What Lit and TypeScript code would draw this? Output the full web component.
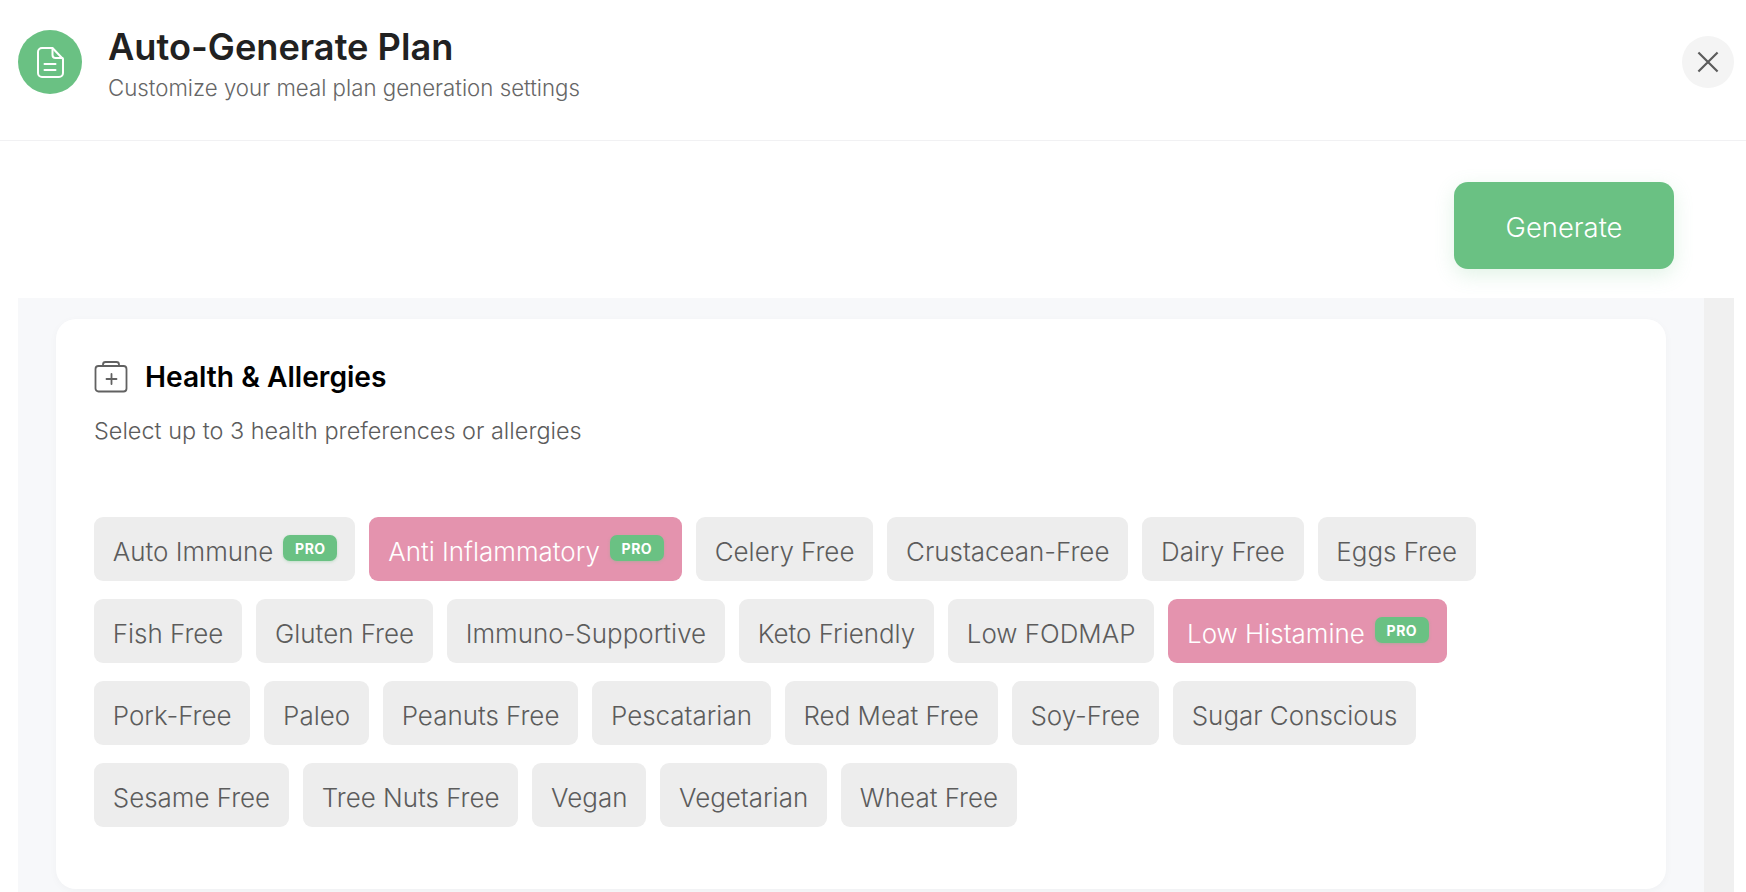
import { LitElement, html, css, svg } from "lit";
import { customElement } from "lit/decorators.js";

type Chip = { label: string; pro?: boolean; selected?: boolean };

const CHIPS: Chip[] = [
  { label: "Auto Immune", pro: true },
  { label: "Anti Inflammatory", pro: true, selected: true },
  { label: "Celery Free" },
  { label: "Crustacean-Free" },
  { label: "Dairy Free" },
  { label: "Eggs Free" },
  { label: "Fish Free" },
  { label: "Gluten Free" },
  { label: "Immuno-Supportive" },
  { label: "Keto Friendly" },
  { label: "Low FODMAP" },
  { label: "Low Histamine", pro: true, selected: true },
  { label: "Pork-Free" },
  { label: "Paleo" },
  { label: "Peanuts Free" },
  { label: "Pescatarian" },
  { label: "Red Meat Free" },
  { label: "Soy-Free" },
  { label: "Sugar Conscious" },
  { label: "Sesame Free" },
  { label: "Tree Nuts Free" },
  { label: "Vegan" },
  { label: "Vegetarian" },
  { label: "Wheat Free" },
];

const docIcon = svg`<svg class="doc" viewBox="0 0 27 31" fill="none" stroke="#fff" stroke-width="2" stroke-linejoin="round" stroke-linecap="round">
  <path d="M5 1h10.500L26 12v14a4 4 0 0 1-4 4H5a4 4 0 0 1-4-4V5a4 4 0 0 1 4-4z"/>
  <path d="M15.500 1.500V8a3 3 0 0 0 3 3h7"/>
  <path d="M7.500 17h11M7.500 23h11"/>
</svg>`;

const kitIcon = svg`<svg class="kit" viewBox="0 0 34 34" fill="none" stroke="#616161" stroke-width="1.8" stroke-linejoin="round" stroke-linecap="round">
  <rect x="1.500" y="6" width="31" height="25.500" rx="3"/>
  <path d="M9 6V4.500A2.500 2.500 0 0 1 11.500 2h11A2.500 2.500 0 0 1 25 4.500V6"/>
  <path d="M17.500 14v10M12.500 19h10"/>
</svg>`;

const closeIcon = svg`<svg class="x" viewBox="0 0 20 20" fill="none" stroke="#5c5c5c" stroke-width="2" stroke-linecap="square">
  <path d="M2 2l16 16M18 2L2 18"/>
</svg>`;

@customElement("app-root")
export class AppRoot extends LitElement {
  static styles = css`
    :host {
      display: flex;
      flex-direction: column;
      height: 892px;
      overflow: hidden;
      background: #fff;
      font-family: Inter, "Liberation Sans", sans-serif;
    }
    .header {
      flex: none;
      box-sizing: border-box;
      height: 141px;
      padding: 30px 12px 0 18px;
      display: flex;
      align-items: flex-start;
      border-bottom: 1px solid #f1f1f3;
    }
    .circle {
      flex: none;
      width: 64px;
      height: 64px;
      border-radius: 50%;
      background: #6ac183;
      display: flex;
      align-items: center;
      justify-content: center;
    }
    .doc { width: 27px; height: 31px; }
    .titles {
      flex: 1;
      margin-left: 26px;
      margin-top: -5px;
    }
    h1 {
      margin: 0;
      font-size: 36.2px;
      line-height: 44px;
      font-weight: 600;
      color: #212121;
    }
    .sub {
      margin-top: 5px;
      font-size: 22.25px;
      line-height: 28px;
      font-weight: 350;
      color: #666;
    }
    .close {
      flex: none;
      width: 52px;
      height: 52px;
      margin-top: 6px;
      border: 0;
      padding: 0;
      border-radius: 50%;
      background: #f4f4f4;
      display: flex;
      align-items: center;
      justify-content: center;
    }
    .x { width: 22px; height: 22px; }
    .actions {
      flex: none;
      height: 157px;
      box-sizing: border-box;
      padding: 41px 72px 0 0;
      display: flex;
      justify-content: flex-end;
      align-items: flex-start;
    }
    .generate {
      width: 220px;
      height: 87px;
      padding: 2px 0 0;
      border: 0;
      border-radius: 14px;
      background: #6ac183;
      color: #fff;
      font: 350 27.4px Inter, "Liberation Sans", sans-serif;
      box-shadow: 0 6px 20px rgba(106, 193, 131, 0.2);
    }
    .body {
      flex: 1;
      min-height: 0;
      margin: 0 12px 0 18px;
      display: flex;
      background: #f7f8fa;
    }
    .scroll {
      flex: 1;
      min-width: 0;
      box-sizing: border-box;
      padding: 21px 38px 0;
    }
    .scrollbar {
      flex: none;
      width: 30px;
      background: #f0f0f0;
    }
    .card {
      box-sizing: border-box;
      height: 570px;
      background: #fff;
      border-radius: 20px;
      padding: 40px 38px 0;
      box-shadow: 0 2px 8px rgba(0, 0, 0, 0.03);
    }
    .card-title {
      display: flex;
      align-items: center;
      gap: 17px;
      height: 36px;
    }
    .kit { width: 34px; height: 34px; }
    h2 {
      margin: 0;
      font-size: 28.16px;
      line-height: 36px;
      font-weight: 600;
      color: #000;
    }
    .desc {
      margin-top: 22px;
      font-size: 23.45px;
      line-height: 28px;
      font-weight: 350;
      color: #5c5c5c;
    }
    .chips {
      margin-top: 72px;
      display: flex;
      flex-wrap: wrap;
      gap: 18px 14px;
      width: 1450px;
    }
    .chip {
      box-sizing: border-box;
      height: 64px;
      padding: 0 18.8px;
      display: flex;
      align-items: center;
      gap: 10px;
      border-radius: 9px;
      background: #ededed;
      color: #5c5c5c;
      font-size: 25.95px;
      font-weight: 350;
      white-space: nowrap;
    }
    .label { padding-top: 4px; }
    .chip.selected {
      background: #e493ae;
      color: #fff;
    }
    .chip.pro { padding-right: 18px; }
    .pro-badge {
      width: 54px;
      height: 26px;
      margin-top: -2px;
      border-radius: 7px;
      background: #6ac183;
      color: #fff;
      font-size: 14px;
      font-weight: 700;
      letter-spacing: 0.5px;
      display: flex;
      align-items: center;
      justify-content: center;
      box-shadow: 0 1px 3px rgba(106, 193, 131, 0.35);
    }
  `;

  render() {
    return html`
      <header class="header">
        <div class="circle">${docIcon}</div>
        <div class="titles">
          <h1>Auto-Generate Plan</h1>
          <div class="sub">Customize your meal plan generation settings</div>
        </div>
        <button class="close" aria-label="Close">${closeIcon}</button>
      </header>
      <div class="actions"><button class="generate">Generate</button></div>
      <div class="body">
        <div class="scroll">
          <section class="card">
            <div class="card-title">${kitIcon}<h2>Health &amp; Allergies</h2></div>
            <div class="desc">Select up to 3 health preferences or allergies</div>
            <div class="chips">
              ${CHIPS.map(
                (c) => html`<div class="chip ${c.selected ? "selected" : ""} ${c.pro ? "pro" : ""}">
                  <span class="label">${c.label}</span>
                  ${c.pro ? html`<span class="pro-badge">PRO</span>` : ""}
                </div>`
              )}
            </div>
          </section>
        </div>
        <div class="scrollbar"></div>
      </div>
    `;
  }
}
